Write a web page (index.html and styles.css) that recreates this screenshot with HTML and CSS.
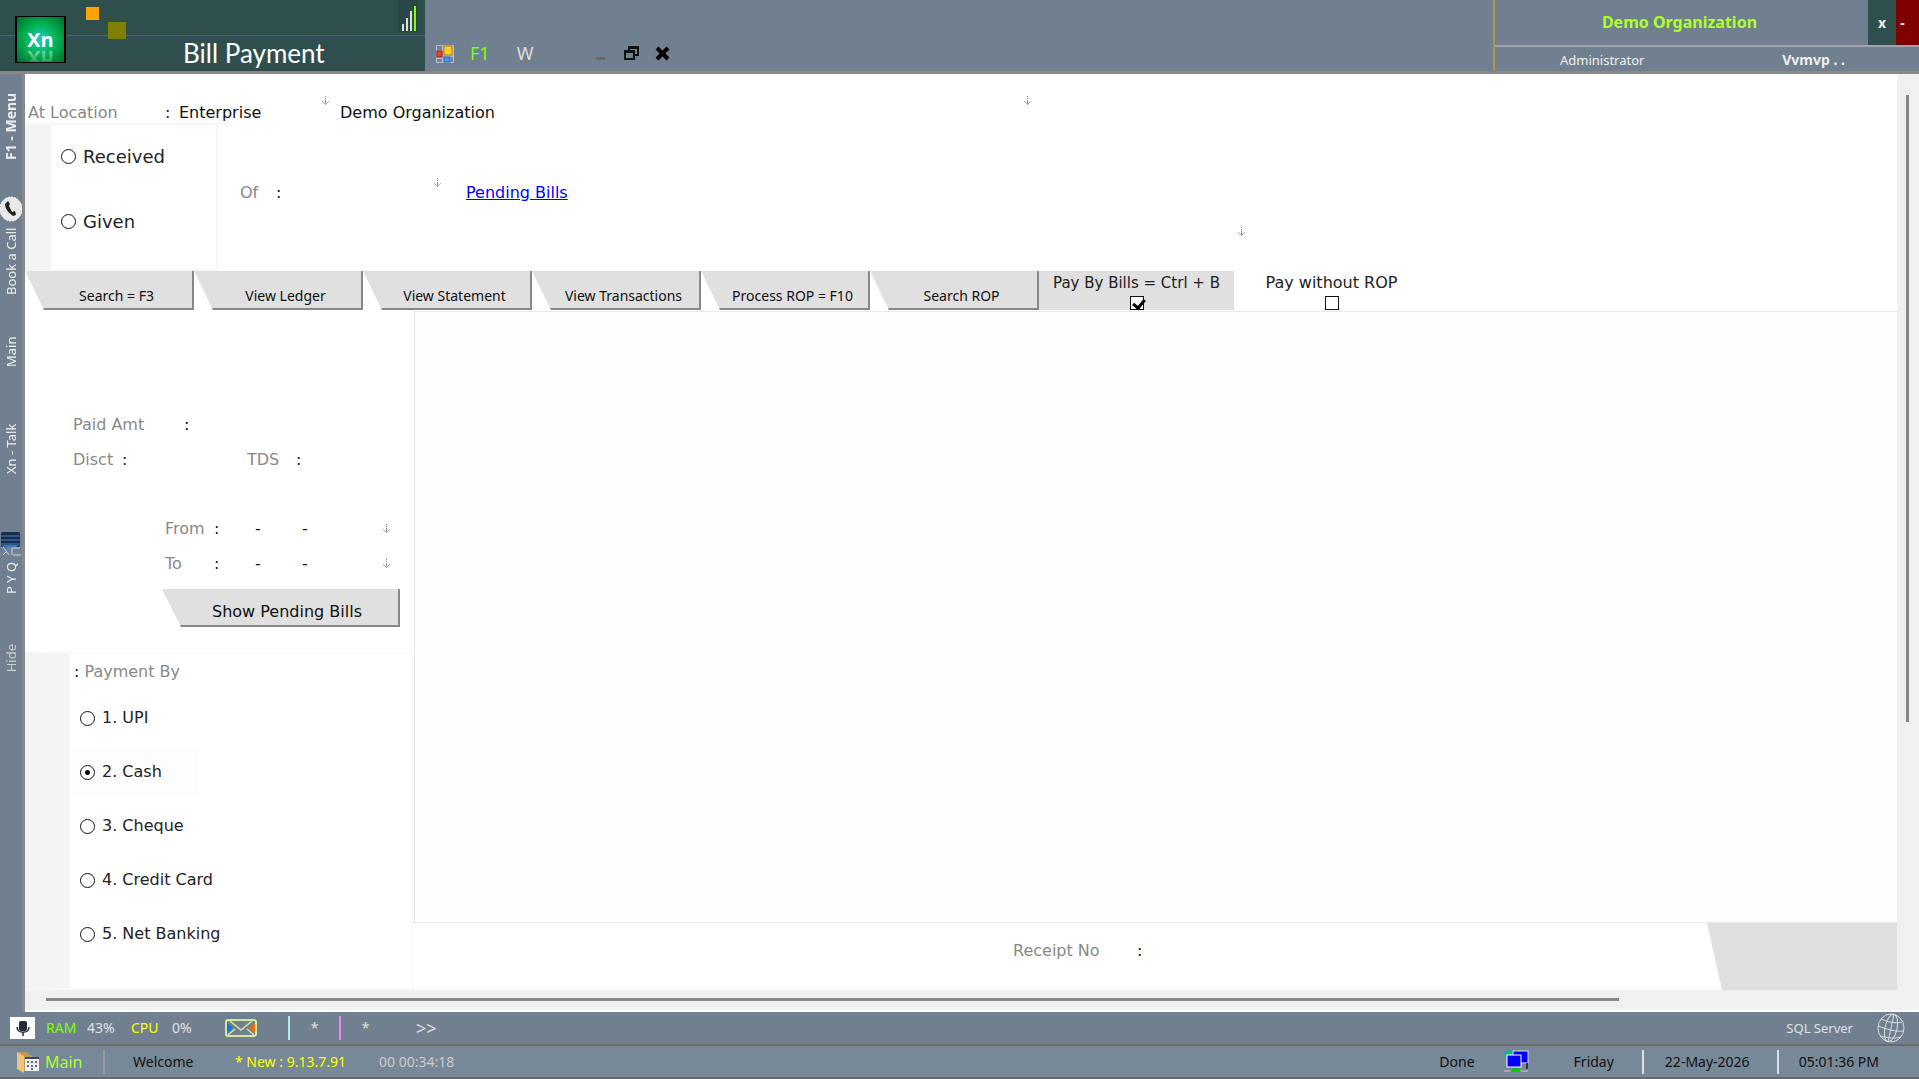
FILE: index.html
```
<!DOCTYPE html>
<html lang="en">
<head>
  <meta charset="utf-8">
  <title>Bill Payment</title>
  <link rel="stylesheet" href="styles.css">
</head>
<body>

<svg class="defs" width="0" height="0">
  <symbol id="down" viewBox="0 0 8 10">
    <path d="M3 0h1v1h-1zM3 2h1v1h-1zM3 4h1v4h-1z" fill="#888"/>
    <path d="M0 5h1v1h1v1h3v-1h1v-1h1v1h-1v1h-1v1h-1v1h-1v-1h-1v-1h-1v-1h-1z" fill="#aaa"/>
  </symbol>
</svg>

<header class="header">
  <div class="brand">
    <div class="brand-top">
      <span class="square orange"></span>
      <span class="square olive"></span>
      <svg class="signal" width="20" height="32" viewBox="0 0 20 32">
        <rect width="20" height="32" fill="#2b4848"/>
        <path d="M5 24v7M9 18v13M13 11v20" stroke="#ddd" stroke-width="2"/>
        <path d="M17 6v25" stroke="#7fff00" stroke-width="2"/>
      </svg>
    </div>
    <h1>Bill Payment</h1>
    <div class="logo"><span>Xn</span></div>
  </div>
  <nav class="tools">
    <svg width="18" height="18" viewBox="0 0 18 18">
      <rect width="18" height="18" rx="1" fill="#b8bcc4"/>
      <path d="M1 1h5v4H1zM1 14h5v3H1zM15 12h2v5h-2z" fill="#788290"/>
      <rect x="8" y="1" width="8" height="9" fill="#ffc928" stroke="#b27c08"/>
      <rect x="1" y="6" width="5" height="6" fill="#e24a34" stroke="#941b15"/>
      <rect x="8" y="12" width="6" height="5" fill="#4d94f5" stroke="#2a5dad"/>
    </svg>
    <button class="tool green">F1</button>
    <button class="tool">W</button>
    <button class="win min" aria-label="Minimize"><svg width="15" height="16"><path d="M3 12h9v3H3z" fill="#696969"/></svg></button>
    <button class="win" aria-label="Restore"><svg width="15" height="16" fill="none" stroke="#111" stroke-width="2"><path d="M5 5V2h9v8h-3M5 3h9M1 6h9v8H1zM1 7h9"/></svg></button>
    <button class="win" aria-label="Close"><svg width="15" height="16" stroke="#000" stroke-width="4"><path d="M2 3l11 11M13 3L2 14"/></svg></button>
  </nav>
  <div class="account">
    <div class="org">
      <strong>Demo Organization</strong>
      <button class="exit">x</button>
      <button class="hide">-</button>
    </div>
    <div class="user">
      <span>Administrator</span>
      <b>Vvmvp . .</b>
    </div>
  </div>
</header>

<div class="middle">
  <nav class="sidebar">
    <button class="side menu">F1 - Menu</button>
    <svg class="phone" width="22" height="26" viewBox="0 0 22 26">
      <ellipse cx="11" cy="13" rx="11" ry="12" fill="#e8e8e8" stroke="#fff" stroke-dasharray="2 1"/>
      <path d="M8 5l-3 3c0 5 4 9 8 12l3-1-1-4-3 1-3-6 1-2z" fill="#222"/>
    </svg>
    <button class="side call">Book a Call</button>
    <button class="side main">Main</button>
    <button class="side talk">Xn - Talk</button>
    <svg class="board" width="22" height="26" viewBox="0 0 22 26">
      <rect x="1" y="1" width="19" height="15" rx="2" fill="#142d50"/>
      <path d="M1 5h20M1 9h20M1 13h20" stroke="#5382b8"/>
      <path d="M2 14h17l-3 2H8l-3 3z" fill="#3a75bd"/>
      <path d="M12 24V17h8M13 24h8M3 16l6 8M3 24l4-4" stroke="#c5d1e0" fill="none"/>
    </svg>
    <button class="side pyq">P Y Q</button>
    <button class="side off">Hide</button>
  </nav>

  <main class="page">
    <div class="form">
      <div class="location">
        <label for="level">At Location</label>
        <span class="colon">:</span>
        <select id="level" class="level"><option>Enterprise</option></select>
        <svg class="down" width="8" height="10"><use href="#down"/></svg>
        <select class="branch" aria-label="Organization"><option>Demo Organization</option></select>
        <svg class="down" width="8" height="10"><use href="#down"/></svg>
      </div>

      <div class="party">
        <div class="direction">
          <label><input type="radio" name="direction"> Received</label>
          <label><input type="radio" name="direction"> Given</label>
        </div>
        <div class="of">
          <label for="party">Of</label>
          <span class="colon">:</span>
          <input type="text" id="party">
          <svg class="down" width="8" height="10"><use href="#down"/></svg>
          <a href="#">Pending Bills</a>
        </div>
        <svg class="down last" width="8" height="10"><use href="#down"/></svg>
      </div>

      <div class="tabs">
        <button class="tab">Search = F3</button>
        <button class="tab">View Ledger</button>
        <button class="tab">View Statement</button>
        <button class="tab">View Transactions</button>
        <button class="tab">Process ROP = F10</button>
        <button class="tab">Search ROP</button>
        <label class="check filled">Pay By Bills = Ctrl + B <input type="checkbox" checked></label>
        <label class="check">Pay without ROP <input type="checkbox"></label>
      </div>

      <div class="body">
        <div class="left">
          <div class="amounts">
            <div class="row">
              <label for="paid" class="paid">Paid Amt</label><span class="colon">:</span>
              <input type="text" id="paid">
            </div>
            <div class="row">
              <label for="disct" class="disct">Disct</label><span class="colon">:</span>
              <input type="text" id="disct" class="small">
              <label for="tds" class="tds">TDS</label><span class="colon">:</span>
              <input type="text" id="tds">
            </div>
          </div>
          <div class="dates">
            <div class="row">
              <label for="from" class="date">From</label><span class="colon">:</span>
              <input type="text" id="from" class="day-part"><span class="dash">-</span>
              <input type="text" class="part" aria-label="From month"><span class="dash">-</span>
              <input type="text" class="year" aria-label="From year">
              <svg class="down" width="8" height="10"><use href="#down"/></svg>
            </div>
            <div class="row">
              <label for="to" class="date">To</label><span class="colon">:</span>
              <input type="text" id="to" class="day-part"><span class="dash">-</span>
              <input type="text" class="part" aria-label="To month"><span class="dash">-</span>
              <input type="text" class="year" aria-label="To year">
              <svg class="down" width="8" height="10"><use href="#down"/></svg>
            </div>
            <button class="tab show">Show Pending Bills</button>
          </div>
          <div class="payment">
            <div class="payment-title"><span>:</span> Payment By</div>
            <label><input type="radio" name="mode"> 1. UPI</label>
            <label class="current"><input type="radio" name="mode" checked> 2. Cash</label>
            <label><input type="radio" name="mode"> 3. Cheque</label>
            <label><input type="radio" name="mode"> 4. Credit Card</label>
            <label><input type="radio" name="mode"> 5. Net Banking</label>
          </div>
        </div>
        <div class="right">
          <div class="grid"></div>
          <div class="receipt">
            <label for="receipt">Receipt No</label>
            <span class="colon">:</span>
            <input type="text" id="receipt">
            <button class="save" aria-label="Save"></button>
          </div>
        </div>
      </div>
    </div>
    <div class="vscroll"><div class="thumb"></div></div>
    <div class="hscroll"><div class="thumb"></div></div>
  </main>
</div>

<footer>
  <div class="status">
    <svg class="mic" width="25" height="22" viewBox="0 0 25 22">
      <rect width="25" height="22" fill="#fff"/>
      <rect x="9" y="4" width="8" height="10" rx="2" fill="#222b33"/>
      <path d="M7 10c0 7 12 7 12 0M13 15v4" stroke="#222b33" stroke-width="1.500" fill="none"/>
    </svg>
    <span class="ram">RAM</span>
    <span class="ram-value">43%</span>
    <span class="cpu">CPU</span>
    <span class="cpu-value">0%</span>
    <svg class="mail" width="32" height="18" viewBox="0 0 32 18">
      <path d="M2 4l6 5-6 5z" fill="#0878d0"/>
      <path d="M30 4l-6 5 6 5z" fill="#f56a00"/>
      <rect x="1" y="1" width="30" height="16" rx="2" fill="none" stroke="#d4e69a" stroke-width="2"/>
      <path d="M5 2l11 9L27 2M3 16l7-6M29 16l-7-6" fill="none" stroke="#d4e69a" stroke-width="1.500"/>
    </svg>
    <i class="bar cyan"></i>
    <span class="star">*</span>
    <i class="bar violet"></i>
    <span class="star">*</span>
    <span class="more">&gt;&gt;</span>
    <span class="server">SQL Server</span>
    <svg class="globe" width="28" height="30" viewBox="0 0 28 30" fill="none" stroke="#d8dce0">
      <ellipse cx="14" cy="15" rx="13" ry="14"/>
      <ellipse cx="14" cy="15" rx="6" ry="14" transform="rotate(12 14 15)"/>
      <path d="M17 1L11 29M1 13c8 3 17 6 26 5M4 6c7 3 14 5 21 3M3 23c8 2 15 3 21 1"/>
    </svg>
  </div>
  <div class="status bottom">
    <svg class="folder" width="24" height="22" viewBox="0 0 24 22">
      <path d="M1 1h9l6 4v15H6z" fill="#c49a50"/>
      <path d="M1 1l7 4v17l-7-4z" fill="#eac57e"/>
      <rect x="9" y="6" width="14" height="14" fill="#eef2f5"/>
      <path d="M9 7h14" stroke="#384c64" stroke-width="2"/>
      <path d="M11 11h2M15 11h2M11 15h2M19 15h2M15 18h2" stroke="#667" stroke-width="2"/>
      <path d="M19 11h2" stroke="#d44" stroke-width="2"/>
      <path d="M15 15h2" stroke="#28a" stroke-width="2"/>
    </svg>
    <button class="home">Main</button>
    <i class="bar gray"></i>
    <span class="welcome">Welcome</span>
    <span class="version">* New : 9.13.7.91</span>
    <span class="uptime">00 00:34:18</span>
    <span class="done">Done</span>
    <svg class="network" width="25" height="23" viewBox="0 0 25 23">
      <circle cx="5" cy="5" r="5" fill="#19a8c0"/>
      <path d="M1 3l4-2 2 3-4 4z" fill="#24ba50"/>
      <rect x="9" y="1" width="15" height="12" fill="#00f" stroke="#ddd"/>
      <rect x="3" y="5" width="14" height="12" fill="#00f" stroke="#fff"/>
      <path d="M23 13v6" stroke="#333" stroke-width="2"/>
      <path d="M0 21h24" stroke="#aaa" stroke-width="2"/>
      <path d="M9 18h5l3 4H6z" fill="#0c0"/>
    </svg>
    <span class="day">Friday</span>
    <i class="bar light"></i>
    <span class="today">22-May-2026</span>
    <i class="bar light"></i>
    <span class="clock">05:01:36 PM</span>
  </div>
</footer>

</body>
</html>
```

FILE: styles.css
```
* {
  box-sizing: border-box;
}

body {
  margin: 0;
  min-height: 100vh;
  display: flex;
  flex-direction: column;
  font-family: "DejaVu Sans", Verdana, sans-serif;
  font-size: 16px;
  line-height: 20px;
  color: #111;
  background: #708090;
}

button,
input,
select {
  font: inherit;
  color: inherit;
  border: none;
  background: none;
  padding: 0;
  margin: 0;
}

svg {
  flex: none;
}

.defs {
  position: absolute;
}

/* Header */
.header {
  display: flex;
  height: 74px;
  flex: none;
  border-bottom: 3px solid #888;
  font-family: "Noto Sans", sans-serif;
}

.brand {
  position: relative;
  width: 425px;
  background: #2f4f4f;
}

.brand-top {
  height: 36px;
  border-bottom: 1px solid #556b2f;
  display: flex;
  padding-left: 86px;
}

.square {
  width: 13px;
  height: 13px;
  margin-top: 7px;
  background: #ffa500;
}

.square.olive {
  width: 18px;
  height: 17px;
  margin-top: 22px;
  margin-left: 9px;
  background: #808000;
}

.signal {
  margin-left: auto;
  margin-right: 7px;
}

.brand h1 {
  margin: 0;
  padding-left: 183px;
  font-family: Lato, sans-serif;
  font-size: 26px;
  line-height: 35px;
  font-weight: 400;
  color: #fff;
}

.logo {
  position: absolute;
  left: 15px;
  top: 16px;
  width: 51px;
  height: 47px;
  overflow: hidden;
  border: 2px solid #000;
  border-width: 1px 2px;
  background: radial-gradient(#1cc8ae 10%, #00b050 50%, #006b2c);
  font-size: 20px;
  line-height: 22px;
  font-weight: 700;
  color: #fff;
  text-align: center;
}

.logo span {
  display: block;
  margin-top: 12px;
  -webkit-box-reflect: below -4px linear-gradient(transparent, rgba(0, 0, 0, 0.5));
}

.tools {
  flex: 1;
  display: flex;
  align-items: flex-end;
  padding: 0 0 8px 11px;
}

.tool {
  width: 24px;
  margin-left: 16px;
  font-size: 18px;
  color: #ddd;
}

.tool.green {
  width: 17px;
  color: #7fff00;
  margin-right: 10px;
}

.win {
  width: 15px;
  height: 18px;
  margin-left: 16px;
}

.win.min {
  margin-left: 56px;
}

.account {
  width: 22.2%;
  border-left: 2px solid #b8963e;
  color: #eee;
}

.org {
  height: 47px;
  display: flex;
  border-bottom: 2px solid #a0a4a8;
}

.org strong {
  flex: 1;
  padding-right: 4px;
  font-size: 16px;
  line-height: 45px;
  text-align: center;
  color: #adff2f;
}

.exit,
.hide {
  width: 28px;
  background: #2f4f4f;
  font-size: 14px;
  font-weight: 700;
}

.hide {
  width: 23px;
  background: #800000;
  padding-right: 10px;
}

.user {
  display: flex;
  justify-content: space-between;
  padding: 3px 74px 0 65px;
  font-size: 13px;
}

.user b {
  font-size: 14px;
}

/* Sidebar */
.middle {
  flex: 1;
  display: flex;
}

.sidebar {
  width: 25px;
  border-right: 3px solid #888;
  display: flex;
  flex-direction: column;
  align-items: center;
  padding-top: 16px;
  font-family: "Noto Sans", sans-serif;
  font-size: 13px;
  color: #eee;
}

.side {
  writing-mode: vertical-rl;
  transform: rotate(180deg);
  text-align: center;
}

.menu {
  height: 72px;
  font-size: 14px;
  font-weight: 700;
}

.phone {
  margin-top: 34px;
}

.call {
  height: 70px;
  margin-top: 4px;
}

.main {
  height: 30px;
  margin-top: 41px;
}

.talk {
  height: 56px;
  margin-top: 54px;
}

.board {
  margin-top: 54px;
}

.pyq {
  height: 38px;
  margin-top: 2px;
  margin-bottom: 47px;
}

.off {
  color: #ccc;
}

/* Page with its scrollbars */
.page {
  flex: 1;
  display: grid;
  grid-template-columns: 1fr 22px;
  grid-template-rows: 1fr 20px;
  background: #f0f0f0;
  border-bottom: 2px solid #fff;
}

.form {
  display: flex;
  flex-direction: column;
  background: #fff;
}

.vscroll {
  padding: 21px 0 0 9px;
}

.vscroll .thumb {
  width: 3px;
  height: 70%;
  background: #888;
}

.hscroll {
  grid-column: 1 / 3;
  padding: 8px 0 0 21px;
}

.hscroll .thumb {
  width: 84%;
  height: 3px;
  background: #888;
}

label {
  color: #888;
}

.colon {
  width: 14px;
  color: #111;
}

/* Location and party */
.location {
  display: flex;
  align-items: flex-end;
  height: 49px;
  padding-left: 3px;
}

.location label {
  width: 137px;
}

.location .down {
  align-self: center;
  margin-top: 5px;
}

select {
  appearance: none;
}

.level {
  width: 143px;
}

.branch {
  width: 684px;
  margin-left: 10px;
}

.party {
  display: flex;
  height: 148px;
}

.direction {
  width: 193px;
  border: 2px solid #f7f7f7;
  border-left: 26px solid #f4f4f4;
  padding: 19px 0 0 10px;
}

.direction label {
  display: flex;
  align-items: center;
  gap: 7px;
  height: 25px;
  margin-bottom: 40px;
  font-size: 18px;
  color: #222;
}

input[type="radio"],
input[type="checkbox"] {
  appearance: none;
  flex: none;
  width: 15px;
  height: 15px;
  border: 1px solid #111;
  border-radius: 50%;
  background: #fff;
}

input[type="radio"]:checked {
  background: radial-gradient(#000 2px, #fff 3px);
}

input[type="checkbox"] {
  width: 14px;
  height: 14px;
  border-radius: 0;
}

/* Tick drawn from two borders */
input[type="checkbox"]:checked::after {
  content: "";
  display: block;
  width: 5px;
  height: 9px;
  margin-left: 4px;
  border: solid #000;
  border-width: 0 3px 3px 0;
  transform: rotate(40deg);
}

.of {
  display: flex;
  height: 30px;
  align-items: center;
  margin: 55px 0 0 22px;
}

.of label {
  width: 36px;
}

.of input {
  width: 144px;
}

.of .down {
  align-self: flex-start;
}

.of a {
  margin-left: 24px;
  color: #00f;
}

.last {
  margin: 104px 0 0 670px;
}

/* Button row */
.tabs {
  display: flex;
  height: 40px;
  padding-bottom: 1px;
}

.tab {
  width: 169px;
  padding: 12px 0 0 16px;
  font-family: "Noto Sans", sans-serif;
  font-size: 14px;
  background: #e0e0e0;
  border: solid #888;
  border-width: 0 2px 2px 0;
  clip-path: polygon(0 0, 100% 0, 100% 100%, 19px 100%);
}

.check {
  width: 195px;
  display: flex;
  flex-direction: column;
  align-items: center;
  gap: 3px;
  padding-top: 2px;
  color: #222;
}

.check.filled {
  font-size: 15px;
  background: #e0e0e0;
}

.body {
  flex: 1;
  display: flex;
}

/* Left column */
.left {
  width: 389px;
  display: flex;
  flex-direction: column;
}

.amounts {
  padding: 96px 0 0 48px;
}

.row {
  display: flex;
  align-items: center;
  height: 35px;
}

.row input {
  width: 60px;
}

.paid {
  width: 111px;
}

.disct {
  width: 49px;
}

.row .small {
  width: 111px;
}

.tds {
  width: 49px;
}

.dates {
  padding: 34px 0 0 140px;
}

.date {
  width: 49px;
}

.row .day-part {
  width: 20px;
}

.row .part {
  width: 27px;
}

.dash {
  width: 20px;
  text-align: center;
}

.row .year {
  width: 68px;
}

.show {
  width: 238px;
  height: 38px;
  margin: 8px 0 0 -3px;
  padding: 9px 0 0 14px;
  font-family: inherit;
  font-size: 16px;
}

.payment {
  flex: 1;
  margin-top: 25px;
  border: 2px solid #fafafa;
  border-left: 45px solid #f4f4f4;
  padding-top: 8px;
}

.payment-title {
  padding-left: 4px;
  margin-bottom: 13px;
  color: #888;
}

.payment-title span {
  color: #111;
}

.payment label {
  display: flex;
  align-items: center;
  gap: 7px;
  width: 125px;
  height: 46px;
  margin: 0 0 8px 4px;
  padding-left: 6px;
  color: #222;
  white-space: nowrap;
}

.payment .current {
  background: #fdfdfd;
}

/* Bill list and receipt bar */
.right {
  flex: 1;
  display: flex;
  flex-direction: column;
}

.grid {
  flex: 1;
  border: 1px solid #e8e8e8;
  border-right: none;
  background: #fefefe;
}

.receipt {
  display: flex;
  align-items: center;
  height: 67px;
  padding-left: 599px;
}

.receipt label {
  width: 124px;
}

.receipt input {
  width: 200px;
}

.receipt .colon,
.receipt label,
.receipt input {
  margin-bottom: 12px;
}

.save {
  width: 190px;
  height: 67px;
  margin-left: auto;
  background: #e0e0e0;
  clip-path: polygon(0 0, 100% 0, 100% 100%, 15px 100%);
}

/* Status bars */
.status {
  display: flex;
  align-items: center;
  height: 34px;
  padding: 0 14px 0 10px;
  border-bottom: 2px solid #696969;
  font-family: "Noto Sans", sans-serif;
  font-size: 14px;
  color: #e0e0e0;
  white-space: nowrap;
}

.bottom {
  height: 33px;
  padding: 0 40px 0 16px;
  background: #778899;
  color: #111;
}

.ram {
  width: 41px;
  margin-left: 11px;
  color: #7fff00;
}

.ram-value {
  width: 44px;
}

.cpu {
  width: 41px;
  color: #ff0;
}

.cpu-value {
  width: 53px;
}

.bar {
  width: 2px;
  height: 24px;
  background: #999;
}

.cyan {
  margin-left: 31px;
  background: #afeeee;
}

.violet {
  background: #ee82ee;
}

.light {
  background: #ddd;
}

.star {
  width: 49px;
  text-align: center;
}

.more {
  margin-left: 26px;
  font-size: 18px;
}

.server {
  margin-left: auto;
  margin-right: 24px;
  font-size: 13px;
}

.home {
  width: 58px;
  margin-left: 5px;
  font-size: 16px;
  text-align: left;
  color: #adff2f;
}

.welcome {
  width: 102px;
  margin-left: 28px;
}

.version {
  width: 144px;
  color: #ff0;
}

.uptime {
  color: #ccc;
}

.done {
  margin-left: auto;
}

.network {
  margin: 0 45px 0 29px;
}

.day {
  margin-right: 28px;
}

.today {
  margin: 0 27px 0 21px;
}

.clock {
  margin-left: 20px;
}
```
